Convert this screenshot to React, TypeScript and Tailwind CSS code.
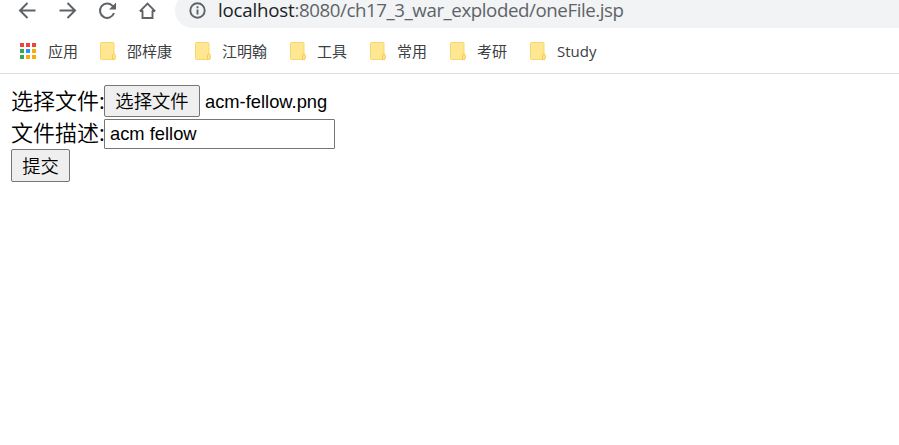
const bookmarks = [
  { label: '邵梓康', width: 'w-[95px]' },
  { label: '江明翰', width: 'w-[95px]' },
  { label: '工具', width: 'w-20' },
  { label: '常用', width: 'w-20' },
  { label: '考研', width: 'w-20' },
  { label: 'Study', width: 'w-20' },
];

const appDots = [
  'bg-[#f44336]', 'bg-[#f44336]', 'bg-[#f44336]',
  'bg-[#34a853]', 'bg-[#2196f3]', 'bg-[#fbab09]',
  'bg-[#34a853]', 'bg-[#fbab09]', 'bg-[#fbab09]',
];

function FolderIcon() {
  return (
    <svg width="17" height="18" viewBox="0 0 17 18" className="mt-px shrink-0">
      <path d="M1.500.5h11.500a1 1 0 0 1 1 1v16H1.500a1 1 0 0 1-1-1v-15a1 1 0 0 1 1-1z" fill="#ffe693" stroke="#f9d766" />
      <path d="M12.500 17.500V13.500a1.400 1.400 0 0 1 2.800 0v2.500a1.500 1.500 0 0 1-1.500 1.500z" fill="#ffe693" stroke="#f3cd4c" />
    </svg>
  );
}

function Toolbar() {
  return (
    <div className="flex h-7 items-end">
      <div className="flex h-[35px] w-[175px] shrink-0 items-center gap-5 pl-[17px]">
        <svg width="20" height="20" viewBox="0 0 20 20" fill="none" stroke="#5f6368" strokeWidth="2">
          <path d="M18.500 9.500H4M10.500 2l-7.500 7.500 7.500 7.500" />
        </svg>
        <svg width="20" height="20" viewBox="0 0 20 20" fill="none" stroke="#5f6368" strokeWidth="2">
          <path d="M2.500 9.500H17M10.500 2l7.500 7.500-7.500 7.500" />
        </svg>
        <svg width="20" height="20" viewBox="0 0 20 20" fill="none">
          <path d="M17 12A7.200 7.200 0 1 1 15.300 4.600L17 6.500" stroke="#5f6368" strokeWidth="2" />
          <path d="M19 1.500v7h-7z" fill="#5f6368" />
        </svg>
        <svg width="20" height="20" viewBox="0 0 20 20" fill="none" stroke="#5f6368" strokeWidth="1.900">
          <path d="M5.500 9.500v7.500h10V9.500" />
          <path d="M2.800 10.300l7.700-7.700 7.700 7.700M3 10h3M15 10h3" />
        </svg>
      </div>
      <div className="flex h-[35px] grow items-center rounded-l-full bg-[#f1f3f4] pl-[14px]">
        <svg width="17" height="17" viewBox="0 0 17 17" fill="none" stroke="#5f6368" strokeWidth="1.900">
          <circle cx="8.500" cy="8.500" r="7.200" />
          <path d="M8.500 7.500v5M8.500 4.300v1.900" />
        </svg>
        <span className="ml-3 pb-px whitespace-nowrap font-['Open_Sans',sans-serif] text-[18.700px] leading-5 tracking-[-0.420px] text-[#5f6368]">
          <span className="tracking-[-0.200px] text-[#202124]">localhost</span>:8080/ch17_3_war_exploded/oneFile.jsp
        </span>
      </div>
    </div>
  );
}

function BookmarksBar() {
  return (
    <div className="flex h-[46px] items-center border-b border-[#dadce0] pl-5 font-['Open_Sans','Noto_Sans_CJK_SC',sans-serif] text-[15px] leading-5 text-[#3c4043]">
      <div className="flex w-20 items-center">
        <div className="grid grid-cols-3 gap-[2px]">
          {appDots.map((color, i) => (
            <i key={i} className={`size-[4px] ${color}`} />
          ))}
        </div>
        <span className="ml-3">应用</span>
      </div>
      {bookmarks.map(({ label, width }) => (
        <div key={label} className={`flex items-center whitespace-nowrap ${width}`}>
          <FolderIcon />
          <span className="ml-[10px]">{label}</span>
        </div>
      ))}
    </div>
  );
}

const control =
  "border border-[#767676] text-[18.330px] leading-none font-['Liberation_Sans','Noto_Sans_CJK_SC',sans-serif] text-black";

function FieldLabel({ text }: { text: string }) {
  return (
    <span className="w-[93px] pb-[3px] font-[350] whitespace-nowrap">
      {text}
      <span className="font-normal">:</span>
    </span>
  );
}

export default function App() {
  return (
    <div className="h-[445px] w-[899px] overflow-hidden bg-white">
      <Toolbar />
      <BookmarksBar />
      <form
        className="pt-[11px] pl-[11px] font-['Open_Sans','Noto_Sans_CJK_SC',sans-serif] text-[22px] leading-8 text-black"
        onSubmit={(e) => e.preventDefault()}
      >
        <div className="flex h-8 items-center">
          <FieldLabel text="选择文件" />
          <button type="button" className={`h-8 w-24 rounded-[2px] bg-[#efefef] pt-[2px] font-[350] whitespace-nowrap ${control}`}>
            选择文件
          </button>
          <span className="ml-[5px] pt-[2px] font-['Liberation_Sans',sans-serif] text-[18.330px]">acm-fellow.png</span>
        </div>
        <div className="flex h-8 items-center">
          <FieldLabel text="文件描述" />
          <input defaultValue="acm fellow" className={`mt-[2px] h-[30px] w-[231px] rounded-[1px] bg-white px-[5px] outline-none ${control}`} />
        </div>
        <button type="submit" className={`block h-[33px] w-[59px] rounded-[2px] bg-[#efefef] pt-[3px] font-[350] ${control}`}>
          提交
        </button>
      </form>
    </div>
  );
}
